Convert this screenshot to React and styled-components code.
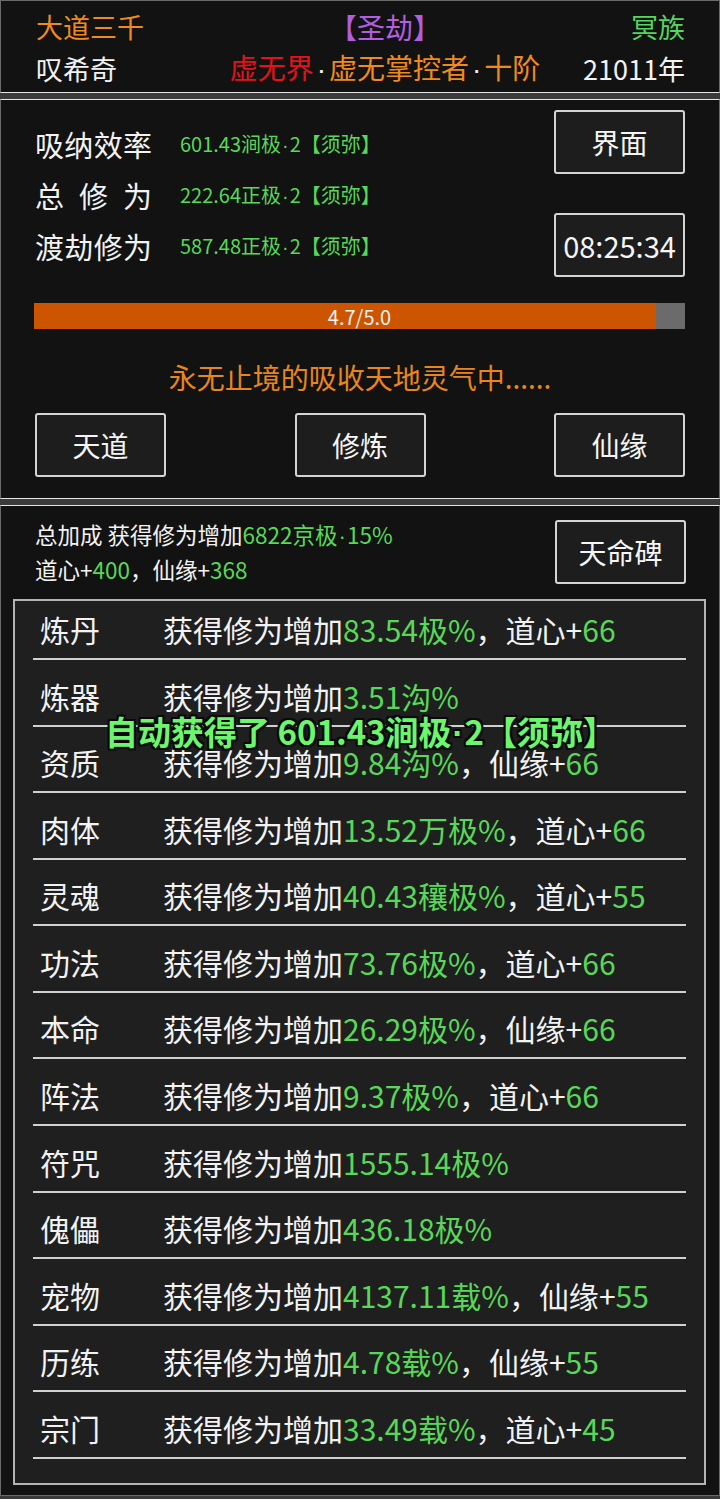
import React from "react";
import styled, { createGlobalStyle } from "styled-components";

const Global = createGlobalStyle`
  html, body { margin: 0; padding: 0; background: #3b3b3b; }
  body { font-family: "Noto Sans CJK SC", "Noto Sans", sans-serif; color: #f2f2f2; }
  * { box-sizing: border-box; }
`;

const C = {
  orange: "#f08a1e",
  green: "#58d858",
  purple: "#b35ee0",
  red: "#e3121b",
  white: "#f2f2f2",
};

const Page = styled.div`
  width: 720px;
  display: flex;
  flex-direction: column;
  gap: 6px;
`;

const Panel = styled.section`
  background: #121212;
  border-top: 1px solid ${(p) => p.$top || "#e6e6e6"};
  border-bottom: 1px solid ${(p) => p.$bottom || "#e6e6e6"};
  border-left: 1px solid #6a6a6a;
  border-right: 1px solid #6a6a6a;
`;

const Header = styled(Panel)`
  padding: 6px 34px 5px 35px;
`;

const HeaderRow = styled.div`
  display: grid;
  grid-template-columns: 190px 1fr 141px;
  align-items: center;
  height: 40px;
  font-size: 27px;
  line-height: 40px;
`;

const Cell = styled.div`
  color: ${(p) => p.$color || C.white};
  text-align: ${(p) => p.$align || "left"};
  font-size: ${(p) => p.$size || 27}px;
  white-space: nowrap;
`;

const Tint = styled.span`
  color: ${(p) => p.$color};
`;

const Dot = styled.span`
  font-family: "Liberation Sans", sans-serif;
  margin: 0 ${(p) => p.$gap || 1}px;
`;

const Main = styled(Panel)`
  padding: 10px 34px 21px 34px;
  display: flex;
  flex-direction: column;
`;

const TopArea = styled.div`
  display: flex;
  justify-content: space-between;
  height: 167px;
`;

const Stats = styled.div`
  padding-top: 8px;
  display: flex;
  flex-direction: column;
`;

const StatRow = styled.div`
  display: flex;
  align-items: center;
  height: 51px;
`;

const StatLabel = styled.div`
  width: 117px;
  margin-right: 28px;
  font-size: 29px;
  line-height: 36px;
  color: ${C.white};
  text-align: justify;
  text-align-last: justify;
  white-space: nowrap;
`;

const StatValue = styled.div`
  font-size: 20px;
  color: ${C.green};
  white-space: nowrap;
`;

const ButtonCol = styled.div`
  display: flex;
  flex-direction: column;
  gap: 39px;
`;

const Button = styled.button`
  width: 131px;
  height: 64px;
  padding: 0;
  background: #1d1d1d;
  border: 2px solid #d4d4d4;
  border-radius: 3px;
  color: #f5f5f5;
  font-family: "Noto Sans CJK SC", sans-serif;
  font-size: ${(p) => p.$size || 28}px;
  display: flex;
  align-items: center;
  justify-content: center;
`;

const Progress = styled.div`
  position: relative;
  margin: 26px 0 0 -1px;
  height: 26px;
  background: #6b6b6b;
`;

const ProgressFill = styled.div`
  height: 100%;
  background: #cd5400;
`;

const ProgressText = styled.div`
  position: absolute;
  inset: 0;
  display: flex;
  align-items: center;
  justify-content: center;
  font-size: 20px;
  color: #f4f4f4;
`;

const Message = styled.div`
  margin-top: 30px;
  height: 36px;
  line-height: 36px;
  text-align: center;
  font-size: 28px;
  color: #e8861c;
`;

const ActionRow = styled.div`
  margin-top: 18px;
  display: flex;
  justify-content: space-between;
`;

const Bonus = styled(Panel)`
  padding: 14px 13px 10px 12px;
  display: flex;
  flex-direction: column;
  border-bottom-color: #6a6a6a;
`;

const BonusTop = styled.div`
  display: flex;
  justify-content: space-between;
  align-items: center;
  height: 64px;
  padding: 0 20px 0 22px;
`;

const BonusText = styled.div`
  font-size: 22.5px;
  line-height: 33px;
  color: ${C.white};
  white-space: nowrap;
`;

const ListBox = styled.div`
  position: relative;
  margin-top: 15px;
  height: 886px;
  background: #1f1f1f;
  border: 2px solid #b4b4b4;
  padding: 0 18px;
`;

const Item = styled.div`
  display: flex;
  align-items: flex-end;
  height: 66.58px;
  padding: 0 0 14px 7px;
  border-bottom: 2px solid #d0d0d0;
  font-size: 30px;
  line-height: 30px;
  white-space: nowrap;
  &:first-child { height: 59px; }
`;

const ItemName = styled.div`
  width: 123px;
  color: ${C.white};
`;

const ItemDesc = styled.div`
  color: ${C.white};
`;

const Toast = styled.div`
  position: absolute;
  top: 111px;
  left: 90px;
  font-size: 33px;
  font-weight: 700;
  line-height: 38px;
  color: #6ef56e;
  white-space: nowrap;
  text-shadow: -2px -2px 0 #0a0a0a, 2px -2px 0 #0a0a0a, -2px 2px 0 #0a0a0a,
    2px 2px 0 #0a0a0a, 0 2px 0 #0a0a0a, 0 -2px 0 #0a0a0a, 2px 0 0 #0a0a0a,
    -2px 0 0 #0a0a0a;
`;

const items = [
  ["炼丹", "83.54极%", "道心", "66"],
  ["炼器", "3.51沟%"],
  ["资质", "9.84沟%", "仙缘", "66"],
  ["肉体", "13.52万极%", "道心", "66"],
  ["灵魂", "40.43穰极%", "道心", "55"],
  ["功法", "73.76极%", "道心", "66"],
  ["本命", "26.29极%", "仙缘", "66"],
  ["阵法", "9.37极%", "道心", "66"],
  ["符咒", "1555.14极%"],
  ["傀儡", "436.18极%"],
  ["宠物", "4137.11载%", "仙缘", "55"],
  ["历练", "4.78载%", "仙缘", "55"],
  ["宗门", "33.49载%", "道心", "45"],
];

const stats = [
  ["吸纳效率", "601.43涧极", "2【须弥】"],
  ["总修为", "222.64正极", "2【须弥】"],
  ["渡劫修为", "587.48正极", "2【须弥】"],
];

export default function App() {
  const progress = 4.7 / 5.0;
  return (
    <>
      <Global />
      <Page>
        <Header $top="#6a6a6a">
          <HeaderRow>
            <Cell $color={C.orange}>大道三千</Cell>
            <Cell $color={C.purple} $align="center" $size={28}>【圣劫】</Cell>
            <Cell $color="#55d65e" $align="right">冥族</Cell>
          </HeaderRow>
          <HeaderRow>
            <Cell>叹希奇</Cell>
            <Cell $align="center" $size={28}>
              <Tint $color={C.red}>虚无界</Tint>
              <Dot $gap={3}>·</Dot>
              <Tint $color={C.orange}>虚无掌控者</Tint>
              <Dot $gap={3}>·</Dot>
              <Tint $color={C.orange}>十阶</Tint>
            </Cell>
            <Cell $align="right">21011年</Cell>
          </HeaderRow>
        </Header>

        <Main>
          <TopArea>
            <Stats>
              {stats.map(([label, a, b]) => (
                <StatRow key={label}>
                  <StatLabel>{label.length === 3 ? label.split("").join(" ") : label}</StatLabel>
                  <StatValue>
                    {a}
                    <Dot>·</Dot>
                    {b}
                  </StatValue>
                </StatRow>
              ))}
            </Stats>
            <ButtonCol>
              <Button>界面</Button>
              <Button $size={29}>08:25:34</Button>
            </ButtonCol>
          </TopArea>
          <Progress>
            <ProgressFill style={{ width: `${progress * 101.6}%` }} />
            <ProgressText>4.7/5.0</ProgressText>
          </Progress>
          <Message>永无止境的吸收天地灵气中......</Message>
          <ActionRow>
            <Button>天道</Button>
            <Button>修炼</Button>
            <Button>仙缘</Button>
          </ActionRow>
        </Main>

        <Bonus>
          <BonusTop>
            <div>
              <BonusText>
                总加成 获得修为增加
                <Tint $color={C.green}>
                  6822京极<Dot>·</Dot>15%
                </Tint>
              </BonusText>
              <BonusText>
                道心+<Tint $color={C.green}>400</Tint>，仙缘+<Tint $color={C.green}>368</Tint>
              </BonusText>
            </div>
            <Button>天命碑</Button>
          </BonusTop>
          <ListBox>
            {items.map(([name, pct, attr, val]) => (
              <Item key={name}>
                <ItemName>{name}</ItemName>
                <ItemDesc>
                  获得修为增加<Tint $color={C.green}>{pct}</Tint>
                  {attr && (
                    <>
                      ，{attr}+<Tint $color={C.green}>{val}</Tint>
                    </>
                  )}
                </ItemDesc>
              </Item>
            ))}
            <Toast>
              自动获得了 601.43涧极<Dot>·</Dot>2【须弥】
            </Toast>
          </ListBox>
        </Bonus>
      </Page>
    </>
  );
}
